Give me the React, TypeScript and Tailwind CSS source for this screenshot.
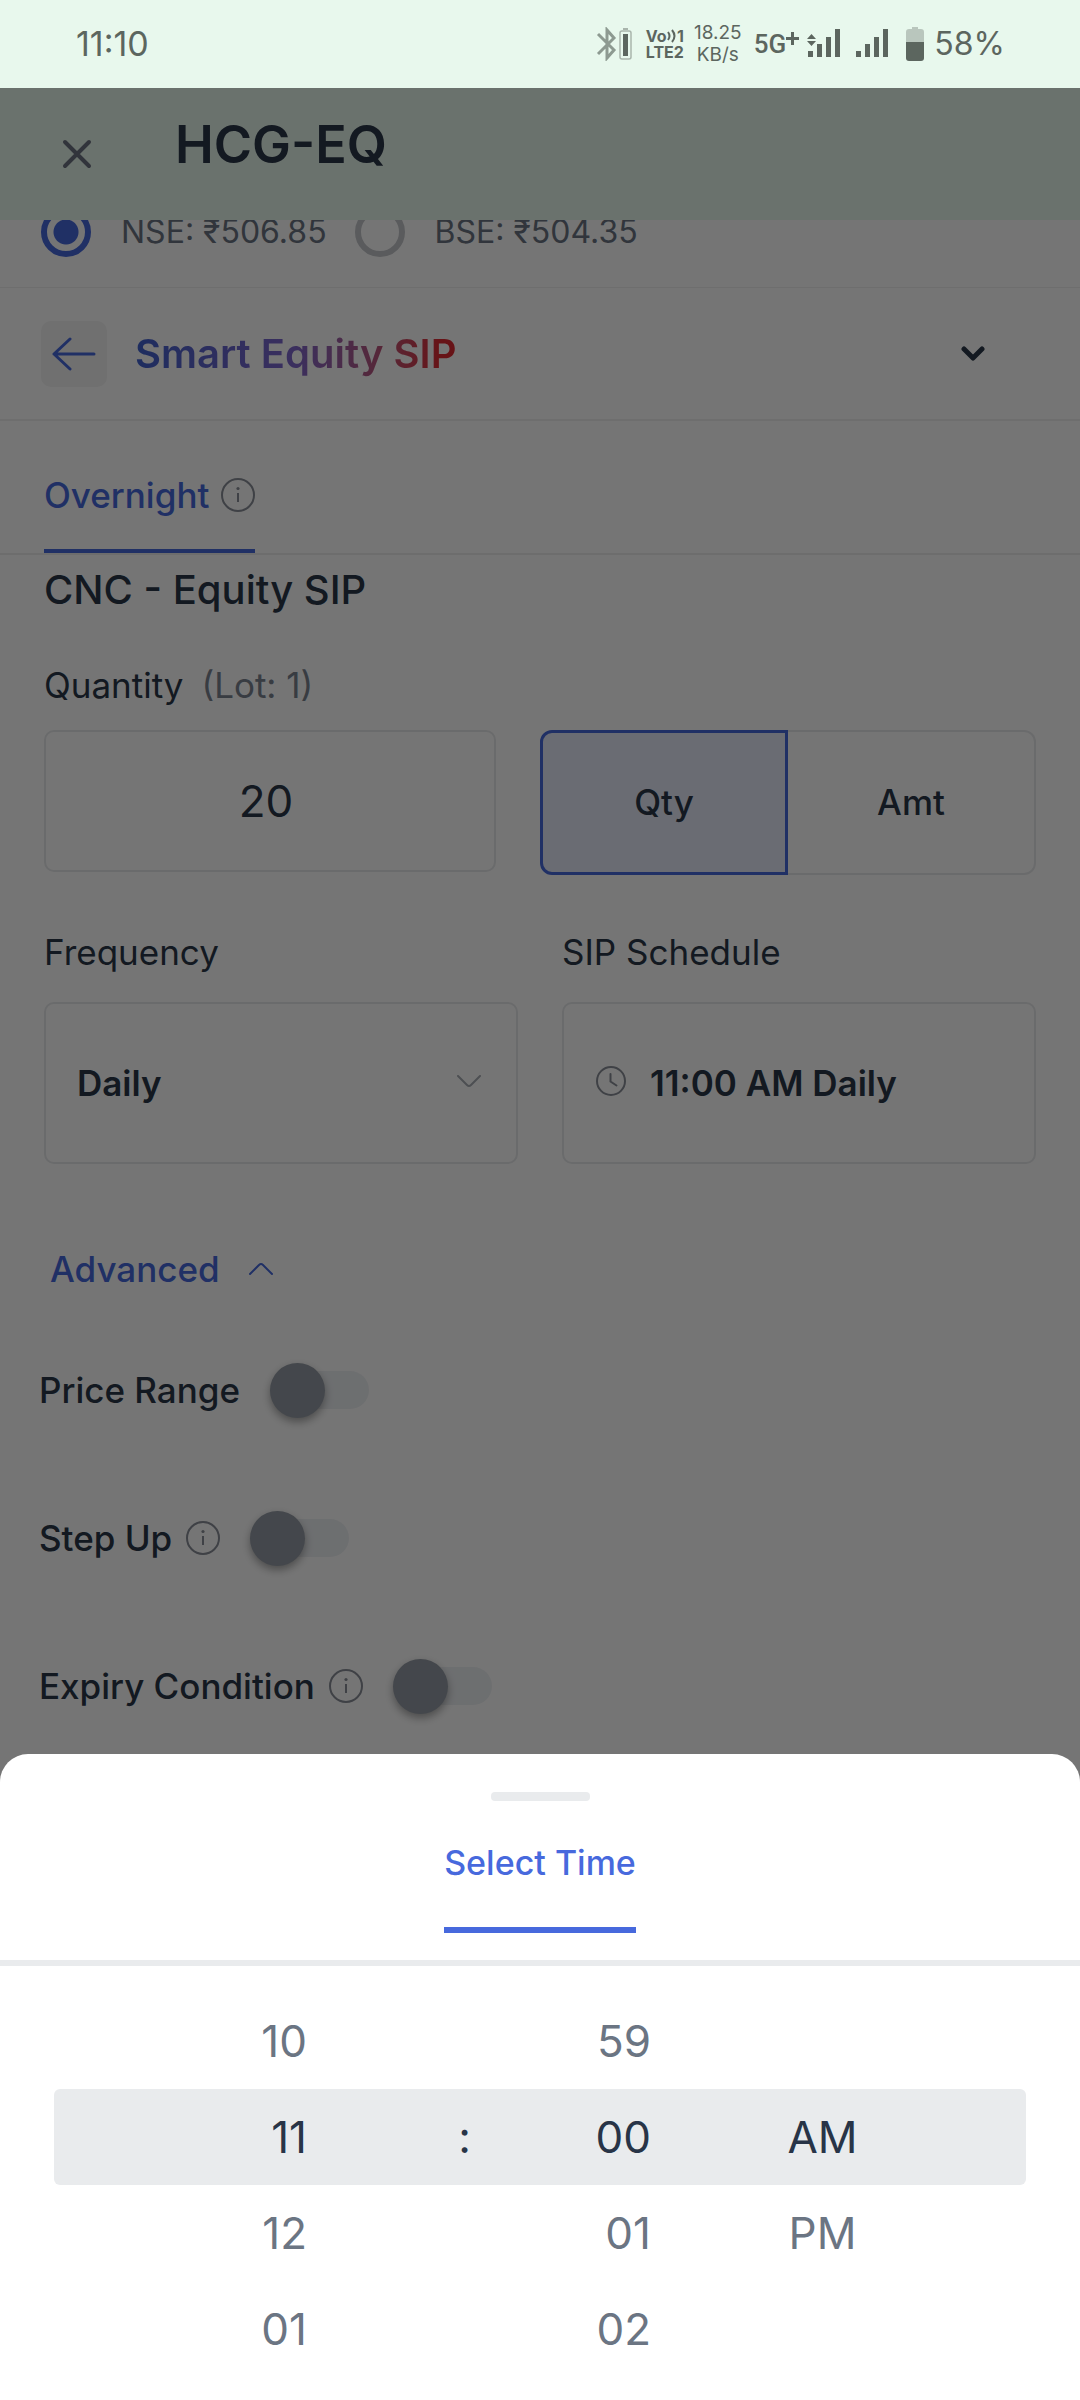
import React, { useState } from "react";

const InfoIcon = () => (
  <svg viewBox="0 0 34 34" className="w-[34px] h-[34px] shrink-0" fill="none" stroke="#8a8f98" strokeWidth="2">
    <circle cx="17" cy="17" r="16" />
    <path d="M17 15v9" />
    <circle cx="17" cy="10.5" r="1.6" fill="#8a8f98" stroke="none" />
  </svg>
);

const StatusBar = () => (
  <div className="flex items-center justify-between h-[88px] pl-[76px] pr-[75px] bg-[#e8f8ed] text-[#5c665f]">
    <span className="text-[34px] leading-10">11:10</span>
    <div className="flex items-center">
      {/* bluetooth + its battery */}
      <svg viewBox="0 0 36 34" className="w-9 h-[34px] mr-[14px]" fill="none">
        <path d="M2 7l16 16-7 8V3l7 8L2 27" stroke="#8d9a91" strokeWidth="3" />
        <path d="M27 1h5v2h-5z" fill="#a9b5ac" />
        <rect x="24" y="4" width="11" height="28" rx="2" stroke="#a9b5ac" strokeWidth="1.5" />
        <rect x="27" y="7" width="5" height="22" fill="#5c665f" />
      </svg>
      <div className="flex flex-col w-[38px] mr-[10px] font-bold text-[16px] leading-4">
        <span className="flex items-center justify-between">
          Vo
          <svg viewBox="0 0 9 14" className="w-[9px] h-[14px]" fill="none" stroke="#5c665f" strokeWidth="2">
            <path d="M1 3q3 4 0 8M5 1q5 6 0 12" />
          </svg>
          1
        </span>
        <span>LTE2</span>
      </div>
      <div className="flex flex-col items-center w-[48px] mr-3 text-[19px] leading-[22px]">
        <span>18.25</span>
        <span>KB/s</span>
      </div>
      <span className="font-['Roboto'] font-medium text-[26px] leading-8">5G</span>
      <svg viewBox="0 0 13 13" className="w-[13px] h-[13px] mb-3 mr-2" stroke="#5c665f" strokeWidth="3">
        <path d="M6.500 0v13M0 6.500h13" />
      </svg>
      <svg viewBox="0 0 33 30" className="w-[33px] h-[30px] mr-4" fill="#5c665f">
        <path d="M0 10l4.500-5 4.500 5zM0 12h9l-4.500 5z" />
        <path d="M1 22h5v6H1zM10 15h5v13h-5zM19 8h5v20h-5zM28 0h5v28h-5z" />
      </svg>
      <svg viewBox="0 0 32 30" className="w-8 h-[30px] mr-[18px]" fill="#5c665f">
        <path d="M0 22h5v6H0zM9 15h5v13H9zM18 8h5v20h-5zM27 0h5v28h-5z" />
      </svg>
      <svg viewBox="0 0 18 34" className="w-[18px] h-[34px] mr-[10px]">
        <path d="M6 0h6v2h3a3 3 0 013 3v10H0V5a3 3 0 013-3h3z" fill="#b9c6bd" />
        <path d="M0 15h18v16a3 3 0 01-3 3H3a3 3 0 01-3-3z" fill="#5c665f" />
      </svg>
      <span className="text-[32px] leading-10">58%</span>
    </div>
  </div>
);

const Exchange = ({ name, price, checked, onChange }: any) => (
  <label className="flex items-center gap-[30px] text-[32px] leading-10 text-[#6b7583]">
    <input
      type="radio"
      name="exchange"
      checked={checked}
      onChange={onChange}
      className="appearance-none w-[50px] h-[50px] rounded-full border-[6px] border-[#c4c6ca] checked:border-[#4769dd] checked:bg-[radial-gradient(circle,#4769dd_12px,transparent_13px)]"
    />
    {name}: ₹{price}
  </label>
);

const Toggle = ({ label, info }: { label: string; info?: boolean }) => {
  const [on, setOn] = useState(false);

  return (
    <div className="flex items-center h-[56px]">
      <span className="text-[35px] leading-10 font-medium">{label}</span>
      {info && (
        <button type="button" aria-label={`About ${label}`} className="ml-[14px]">
          <InfoIcon />
        </button>
      )}
      <button
        type="button"
        role="switch"
        aria-checked={on}
        aria-label={label}
        onClick={() => setOn(!on)}
        className="flex items-center ml-[30px] w-[99px] h-[38px] rounded-full bg-[#eef1f4]"
      >
        <span className="w-[55px] h-[55px] shrink-0 rounded-full bg-[#949ba5] shadow-[0_4px_8px_rgba(0,0,0,0.35)]"></span>
      </button>
    </div>
  );
};

const OrderForm = () => {
  const [exchange, setExchange] = useState("NSE");
  const [qty, setQty] = useState("20");

  return (
    <div className="relative bg-white text-[#2b3849]">
      <header className="flex items-center h-[132px] pl-[61px] bg-[#e8f8ed]">
        <button type="button" aria-label="Close" className="mr-[82px]">
          <svg viewBox="0 0 32 32" className="w-8 h-8" fill="none" stroke="#6b7280" strokeWidth="4" strokeLinecap="round">
            <path d="M4 4l24 24M28 4L4 28" />
          </svg>
        </button>
        <h1 className="pb-[18px] text-[52px] leading-[56px] font-semibold">HCG-EQ</h1>
      </header>

      {/* exchange row, scrolled half way under the header */}
      <div className="flex items-end gap-7 h-[68px] pl-[41px] pb-[30px] overflow-hidden border-b border-[#f0f0f0]">
        <Exchange name="NSE" price="506.85" checked={exchange === "NSE"} onChange={() => setExchange("NSE")} />
        <Exchange name="BSE" price="504.35" checked={exchange === "BSE"} onChange={() => setExchange("BSE")} />
      </div>

      <div className="flex items-center h-[133px] pl-[41px] pr-[95px] border-b-2 border-[#f0f0f0]">
        <button type="button" aria-label="Back" className="flex items-center justify-center w-[66px] h-[66px] mr-7 rounded-[10px] bg-[#f4f4f4]">
          <svg viewBox="0 0 44 34" className="w-11 h-[34px]" fill="none" stroke="#4769dd" strokeWidth="3" strokeLinecap="round" strokeLinejoin="round">
            <path d="M18 2L2 17l16 15M2 17h40" />
          </svg>
        </button>
        <h2 className="text-[40px] leading-[50px] font-semibold text-transparent bg-clip-text bg-linear-to-r from-[#4062d0] via-[#8066cc] via-50% to-[#e02a32] to-95%">
          Smart Equity SIP
        </h2>
        <button type="button" aria-label="Expand" className="ml-auto">
          <svg viewBox="0 0 24 16" className="w-6 h-4" fill="none" stroke="#2b3849" strokeWidth="5" strokeLinecap="round" strokeLinejoin="round">
            <path d="M3 3l9 9 9-9" />
          </svg>
        </button>
      </div>

      <div className="flex h-[134px] px-11 border-b-2 border-[#eeeeee]">
        <button type="button" className="flex items-center gap-3 pt-5 border-b-4 border-[#4769dd] text-[35px] leading-10 font-medium text-[#4769dd]">
          Overnight
          <InfoIcon />
        </button>
      </div>

      <div className="px-11 pt-[10px]">
        <h3 className="text-[40px] leading-[50px] font-medium">CNC - Equity SIP</h3>

        <div className="grid grid-cols-[452fr_496fr] gap-x-11 mt-[50px]">
          <label htmlFor="quantity" className="col-span-2 mb-[25px] text-[35px] leading-10">
            Quantity <span className="ml-2 text-[#7b8390]">(Lot: 1)</span>
          </label>
          <input
            id="quantity"
            value={qty}
            onChange={(e) => setQty(e.target.value)}
            className="w-full h-[142px] pr-2 rounded-[10px] border-2 border-[#e8e9eb] text-center text-[44px] outline-none"
          />
          <div className="grid grid-cols-2 h-[145px] text-[35px] font-medium">
            <button type="button" className="rounded-l-[12px] border-[3px] border-[#4769dd] bg-[#e8ecfa]">Qty</button>
            <button type="button" className="rounded-r-[12px] border-2 border-l-0 border-[#e8e9eb]">Amt</button>
          </div>
        </div>

        <div className="grid grid-cols-2 gap-x-11 gap-y-[30px] mt-[57px]">
          <label htmlFor="frequency" className="text-[35px] leading-10">Frequency</label>
          <label htmlFor="schedule" className="text-[35px] leading-10">SIP Schedule</label>
          <div className="flex items-center h-[162px] pr-[34px] rounded-[10px] border-2 border-[#e8e9eb]">
            <select id="frequency" className="flex-1 h-full pl-[31px] appearance-none bg-transparent text-[35px] font-semibold outline-none">
              <option>Daily</option>
              <option>Weekly</option>
              <option>Monthly</option>
            </select>
            <svg viewBox="0 0 26 16" className="w-[26px] h-4" fill="none" stroke="#a9adb4" strokeWidth="2" strokeLinecap="round" strokeLinejoin="round">
              <path d="M2 1l9 9q2 2 4 0l9-9" />
            </svg>
          </div>
          <button id="schedule" type="button" className="flex items-center h-[162px] pl-8 gap-6 rounded-[10px] border-2 border-[#e8e9eb] text-[35px] font-semibold">
            <svg viewBox="0 0 30 34" className="w-[30px] h-[34px]" fill="none" stroke="#8a8f98" strokeWidth="2" strokeLinecap="round">
              <circle cx="15" cy="15" r="14" />
              <path d="M14.500 8v7.500l6 4" />
            </svg>
            11:00 AM Daily
          </button>
        </div>

        <button type="button" className="flex items-center gap-7 mt-[85px] ml-[6px] text-[35px] leading-10 font-medium text-[#4769dd]">
          Advanced
          <svg viewBox="0 0 26 16" className="w-[26px] h-4" fill="none" stroke="#4769dd" strokeWidth="2" strokeLinecap="round" strokeLinejoin="round">
            <path d="M2 13l9-9q2-2 4 0l9 9" />
          </svg>
        </button>
      </div>

      <div className="flex flex-col gap-[92px] pl-[39px] pt-[73px] pb-[86px]">
        <Toggle label="Price Range" />
        <Toggle label="Step Up" info />
        <Toggle label="Expiry Condition" info />
      </div>

      {/* backdrop */}
      <div className="absolute inset-0 bg-black/54"></div>
    </div>
  );
};

const rows = [
  ["10", "59", ""],
  ["11", "00", "AM"],
  ["12", "01", "PM"],
  ["01", "02", ""],
];

const TimeSheet = () => {
  const [selected, setSelected] = useState({ hour: "11", minute: "00", period: "AM" });

  const cell = (active: boolean) => (active ? "text-[#283447]" : "text-[#6b7583]");

  return (
    <section className="relative flex flex-col flex-1 -mt-[46px] rounded-t-[28px] bg-white">
      <div className="self-center w-[99px] h-[9px] mt-[38px] rounded-[4px] bg-[#e9ebed]"></div>
      <div className="flex justify-center pb-[27px] border-b-[6px] border-[#e9ebed]">
        <button type="button" className="pt-[42px] pb-[44px] border-b-[6px] border-[#4769dd] text-[34px] leading-10 font-medium text-[#4769dd]">
          Select Time
        </button>
      </div>
      <div className="px-[54px] pt-[27px]">
        {rows.map(([hour, minute, period]) => (
          <div
            key={hour}
            className={`grid grid-cols-[253fr_164fr_180fr_343fr_32fr] h-24 text-[44px] ${
              hour === selected.hour ? "rounded-[6px] bg-[#e9ebed]" : ""
            }`}
          >
            <button type="button" onClick={() => setSelected({ ...selected, hour })} className={`text-right ${cell(hour === selected.hour)}`}>
              {hour}
            </button>
            <div className="flex items-center justify-end text-[#283447]">{hour === selected.hour && ":"}</div>
            <button type="button" onClick={() => setSelected({ ...selected, minute })} className={`text-right ${cell(minute === selected.minute)}`}>
              {minute}
            </button>
            {period && (
              <button type="button" onClick={() => setSelected({ ...selected, period })} className={cell(period === selected.period)}>
                {period}
              </button>
            )}
          </div>
        ))}
      </div>
    </section>
  );
};

export default function App() {
  return (
    <div className="flex flex-col min-h-screen font-['Inter',sans-serif] bg-white">
      <StatusBar />
      <OrderForm />
      <TimeSheet />
    </div>
  );
}
